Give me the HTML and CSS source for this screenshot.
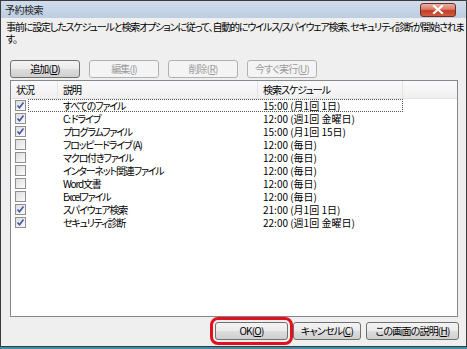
FILE: index.html
```html
<!DOCTYPE html>
<html lang="ja">
<head>
  <meta charset="UTF-8">
  <meta name="viewport" content="width=device-width, initial-scale=1.0">
  <title>予約検索</title>
  <link rel="stylesheet" href="styles.css">
</head>
<body>

<div class="window">
  <div class="titlebar">
    <span class="title">予約検索</span>
    <span class="close-btn">
      <svg width="12" height="9" viewBox="0 0 12 9">
        <path d="M2 1 L10 8 M10 1 L2 8" stroke="#ffffff" stroke-width="2.2" stroke-linecap="square"/>
      </svg>
    </span>
  </div>

  <div class="content">
    <p class="intro">事前に設定したスケジュールと検索オプションに従って、自動的にウイルス/スパイウェア検索、セキュリティ診断が開始されま<br>す。</p>

    <div class="toolbar">
      <button class="btn">追加(<u>D</u>)</button>
      <button class="btn" disabled>編集(<u>I</u>)</button>
      <button class="btn" disabled>削除(<u>R</u>)</button>
      <button class="btn" disabled>今すぐ実行(<u>U</u>)</button>
    </div>

    <div class="listbox">
      <div class="list-header">
        <div class="head-cell head-status">状況</div>
        <div class="head-cell head-desc">説明</div>
        <div class="head-cell head-sched">検索スケジュール</div>
        <div class="head-rest"></div>
      </div>

      <div class="row">
        <span class="check checked"></span>
        <div class="row-body focused"><span class="desc">すべてのファイル</span><span class="sched">15:00 (月1回 1日)</span></div>
      </div>
      <div class="row">
        <span class="check checked"></span>
        <div class="row-body"><span class="desc">C: ドライブ</span><span class="sched">12:00 (週1回 金曜日)</span></div>
      </div>
      <div class="row">
        <span class="check checked"></span>
        <div class="row-body"><span class="desc">プログラムファイル</span><span class="sched">15:00 (月1回 15日)</span></div>
      </div>
      <div class="row">
        <span class="check"></span>
        <div class="row-body"><span class="desc">フロッピードライブ (A)</span><span class="sched">12:00 (毎日)</span></div>
      </div>
      <div class="row">
        <span class="check"></span>
        <div class="row-body"><span class="desc">マクロ付きファイル</span><span class="sched">12:00 (毎日)</span></div>
      </div>
      <div class="row">
        <span class="check"></span>
        <div class="row-body"><span class="desc">インターネット関連ファイル</span><span class="sched">12:00 (毎日)</span></div>
      </div>
      <div class="row">
        <span class="check"></span>
        <div class="row-body"><span class="desc">Word文書</span><span class="sched">12:00 (毎日)</span></div>
      </div>
      <div class="row">
        <span class="check"></span>
        <div class="row-body"><span class="desc">Excelファイル</span><span class="sched">12:00 (毎日)</span></div>
      </div>
      <div class="row">
        <span class="check checked"></span>
        <div class="row-body"><span class="desc">スパイウェア検索</span><span class="sched">21:00 (月1回 1日)</span></div>
      </div>
      <div class="row">
        <span class="check checked"></span>
        <div class="row-body"><span class="desc">セキュリティ診断</span><span class="sched">22:00 (週1回 金曜日)</span></div>
      </div>
    </div>

    <div class="footer">
      <button class="btn btn-ok">OK(<u>O</u>)</button>
      <button class="btn btn-cancel">キャンセル(<u>C</u>)</button>
      <button class="btn btn-help">この画面の説明(<u>H</u>)</button>
    </div>
  </div>
</div>

</body>
</html>
```

FILE: styles.css
```css
body {
  margin: 0;
  background-color: #3f8ea4;
  font-family: "Noto Sans CJK JP", "Liberation Sans", sans-serif;
  font-size: 10px;
  font-feature-settings: "palt";
  letter-spacing: -1px;
  color: #000;
}

.window {
  width: 467px;
  height: 347px;
  box-sizing: border-box;
  border: 1px solid #3c3c3c;
  background-color: #efefef;
  display: flex;
  flex-direction: column;
}

.titlebar {
  height: 17px;
  padding: 0 10px 0 4px;
  background: linear-gradient(#cfdcec, #bdcee2);
  display: flex;
  align-items: center;
  justify-content: space-between;
}

.title {
  color: #262626;
  line-height: 12px;
  letter-spacing: -0.5px;
}

.close-btn {
  width: 34px;
  height: 12px;
  border: 1px solid #6f2e27;
  border-radius: 3px;
  background: linear-gradient(#eab0a2, #d77a66 45%, #c23e26 55%, #d35c40);
  display: flex;
  align-items: center;
  justify-content: center;
}

.content {
  flex: 1;
  padding: 0 8px 0 9px;
  display: flex;
  flex-direction: column;
}

.intro {
  margin: 3px 0 0 -4px;
  line-height: 12px;
  letter-spacing: -1.15px;
  white-space: nowrap;
}

.toolbar {
  display: flex;
  gap: 9px;
  margin-top: 15px;
}

.btn {
  width: 70px;
  height: 18px;
  padding: 0;
  border: 1px solid #707070;
  border-radius: 3px;
  background: linear-gradient(#f3f3f3, #ebebeb 48%, #dddddd 52%, #cfcfcf);
  font: inherit;
  letter-spacing: -0.8px;
  line-height: 14px;
  color: #000;
}

.btn:disabled {
  border-color: #aeb2b6;
  background: #f4f4f4;
  color: #9c9c9c;
}

.listbox {
  margin-top: 2px;
  height: 237px;
  box-sizing: border-box;
  border: 1px solid #828790;
  background-color: #fff;
}

.list-header {
  display: flex;
  height: 17px;
  border-bottom: 1px solid #e2e3e5;
  background: linear-gradient(#fafafa, #f0f0f0);
}

.head-cell {
  box-sizing: border-box;
  padding-left: 5px;
  border-right: 1px solid #e3e4e6;
  line-height: 17px;
  white-space: nowrap;
}

.head-status { width: 47px; }
.head-desc { width: 200px; }
.head-sched { width: 145px; }
.head-rest { flex: 1; }

.row {
  display: flex;
  height: 13px;
}

.check {
  width: 11px;
  height: 11px;
  box-sizing: border-box;
  margin: 1px 2px 0 4px;
  border: 1px solid #8f8f8f;
  background: linear-gradient(135deg, #dcdcdc, #fbfbfb);
}

.check.checked {
  background: url("data:image/svg+xml,%3Csvg xmlns='http://www.w3.org/2000/svg' width='9' height='9'%3E%3Cpath d='M1.5 4.5 L3.5 6.8 L7.5 1.5' fill='none' stroke='%233b5aa6' stroke-width='1.6'/%3E%3C/svg%3E") center no-repeat,
    linear-gradient(135deg, #dcdcdc, #fbfbfb);
}

.row-body {
  width: 375px;
  box-sizing: border-box;
  border: 1px solid transparent;
  display: flex;
  line-height: 11px;
  white-space: nowrap;
}

.row-body.focused {
  border: 1px dotted #555;
}

.desc {
  width: 234px;
  box-sizing: border-box;
  padding-left: 34px;
  letter-spacing: -1.2px;
}

.sched {
  letter-spacing: 0;
}

.footer {
  display: flex;
  justify-content: flex-end;
  gap: 5px;
  margin: 5px -1px 0 0;
}

.btn-ok {
  width: 73px;
  outline: 3px solid #e3101d;
  outline-offset: 2px;
}

.btn-cancel { width: 68px; }
.btn-help { width: 93px; }
```
